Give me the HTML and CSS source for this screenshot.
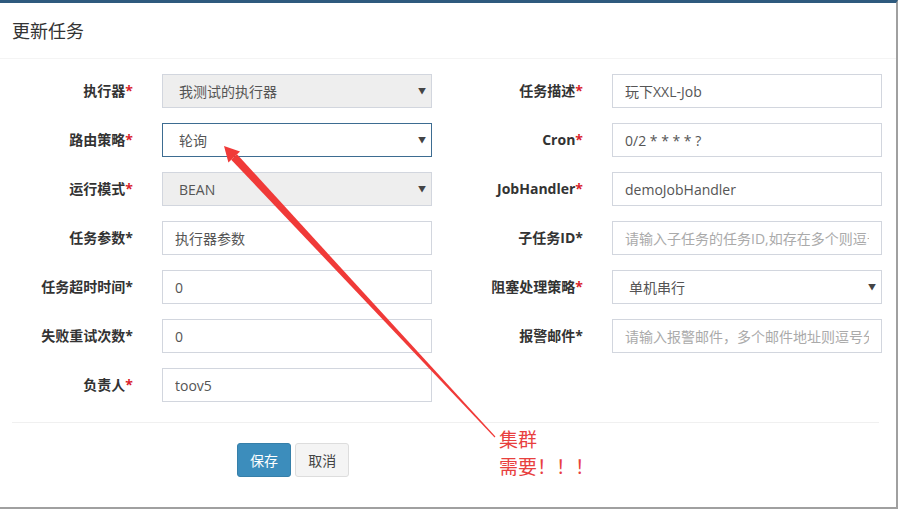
FILE: index.html
```html
<!DOCTYPE html>
<html lang="zh-CN">
<head>
    <meta charset="UTF-8">
    <title>更新任务</title>
    <link rel="stylesheet" href="styles.css">
</head>
<body>
    <div class="modal">
        <div class="modal-header">更新任务</div>

        <form class="modal-body">
            <!-- row 1 -->
            <div class="row">
                <label class="lbl">执行器<i class="req">*</i></label>
                <span class="sel disabled"><select disabled><option>我测试的执行器</option></select></span>
                <label class="lbl">任务描述<i class="req">*</i></label>
                <input type="text" value="玩下XXL-Job">
            </div>
            <!-- row 2 -->
            <div class="row">
                <label class="lbl">路由策略<i class="req">*</i></label>
                <span class="sel focus"><select><option>轮询</option></select></span>
                <label class="lbl">Cron<i class="req">*</i></label>
                <input type="text" value="0/2 * * * * ?">
            </div>
            <!-- row 3 -->
            <div class="row">
                <label class="lbl">运行模式<i class="req">*</i></label>
                <span class="sel disabled"><select disabled><option>BEAN</option></select></span>
                <label class="lbl">JobHandler<i class="req">*</i></label>
                <input type="text" value="demoJobHandler">
            </div>
            <!-- row 4 -->
            <div class="row">
                <label class="lbl">任务参数<i>*</i></label>
                <input type="text" value="执行器参数">
                <label class="lbl">子任务ID<i>*</i></label>
                <input type="text" placeholder="请输入子任务的任务ID,如存在多个则逗号分隔">
            </div>
            <!-- row 5 -->
            <div class="row">
                <label class="lbl">任务超时时间<i>*</i></label>
                <input type="text" value="0">
                <label class="lbl">阻塞处理策略<i class="req">*</i></label>
                <span class="sel"><select><option>单机串行</option></select></span>
            </div>
            <!-- row 6 -->
            <div class="row">
                <label class="lbl">失败重试次数<i>*</i></label>
                <input type="text" value="0">
                <label class="lbl">报警邮件<i>*</i></label>
                <input type="text" placeholder="请输入报警邮件，多个邮件地址则逗号分隔">
            </div>
            <!-- row 7 -->
            <div class="row">
                <label class="lbl">负责人<i class="req">*</i></label>
                <input type="text" value="toov5">
            </div>

            <div class="footer">
                <button type="button" class="btn btn-primary">保存</button>
                <button type="button" class="btn">取消</button>
            </div>
        </form>
    </div>

    <!-- red annotation drawn on top of the screenshot -->
    <svg class="arrow" width="898" height="509" viewBox="0 0 898 509">
        <polygon fill="#f03a38" points="224,146 240,151.5 228.4,162.5"/>
        <polygon fill="#f03a38" points="237,154.3 231.2,159.7 494.6,437.4 495.4,436.6"/>
    </svg>
    <div class="note">集群<br>需要！！！</div>
</body>
</html>
```

FILE: styles.css
```css
body {
    margin: 0;
    width: 896px;
    height: 504px;
    border-right: 2px solid #a0a0a0;
    border-bottom: 2px solid #a0a0a0;
    border-top: 3px solid #2e5a7e;
    box-sizing: content-box;
    background: #fff;
    font-family: "Noto Sans CJK SC", "Open Sans", sans-serif;
    font-size: 14px;
    color: #333;
    position: relative;
    overflow: hidden;
}
.modal-header {
    height: 55px;
    line-height: 55px;
    padding-left: 12px;
    font-size: 18px;
    color: #333;
    border-bottom: 1px solid #f4f4f4;
}
.modal-body {
    padding: 15px 0 0 0;
    margin: 0;
}
.row {
    display: grid;
    grid-template-columns: 133px 299px 151px 299px;
    height: 34px;
    margin-bottom: 15px;
}
.lbl {
    font-family: "Open Sans", "Noto Sans CJK SC", sans-serif;
    font-weight: bold;
    text-align: right;
    line-height: 34px;
    color: #333;
}
.lbl i {
    font-style: normal;
}
.lbl i.req {
    color: #d9232d;
}
.row > input,
.row > .sel {
    margin-left: 29px;
}
input,
select {
    box-sizing: border-box;
    width: 270px;
    height: 34px;
    border: 1px solid #d2d6de;
    padding: 0 12px;
    font-family: "Open Sans", "Noto Sans CJK SC", sans-serif;
    font-size: 14px;
    color: #555;
    background: #fff;
    outline: none;
}
input::placeholder {
    color: #aaa;
}
.sel {
    position: relative;
    display: block;
    width: 270px;
}
.sel select {
    appearance: none;
    -webkit-appearance: none;
    padding-left: 16px;
}
.sel::after {
    content: "▼";
    position: absolute;
    right: 6px;
    top: 11px;
    font-size: 8px;
    color: #444;
}
.sel.disabled select {
    background: #eee;
    opacity: 1;
}
.sel.focus select {
    border-color: #3d6c91;
}
.footer {
    border-top: 1px solid #f0f0f0;
    margin: 20px 17px 0 12px;
    padding: 20px 0 0 225px;
}
.btn {
    height: 34px;
    padding: 0 12px;
    border: 1px solid #ddd;
    border-radius: 3px;
    background: #f4f4f4;
    color: #444;
    font-family: "Noto Sans CJK SC", sans-serif;
    font-size: 14px;
    margin-right: 1px;
}
.btn-primary {
    background: #3c8dbc;
    border-color: #367fa9;
    color: #fff;
}
.arrow {
    position: absolute;
    left: 0;
    top: -3px;
    pointer-events: none;
}
.note {
    position: absolute;
    left: 499px;
    top: 422px;
    font-family: "Noto Sans CJK SC", sans-serif;
    font-size: 19px;
    line-height: 27px;
    color: #e8403e;
}
```
